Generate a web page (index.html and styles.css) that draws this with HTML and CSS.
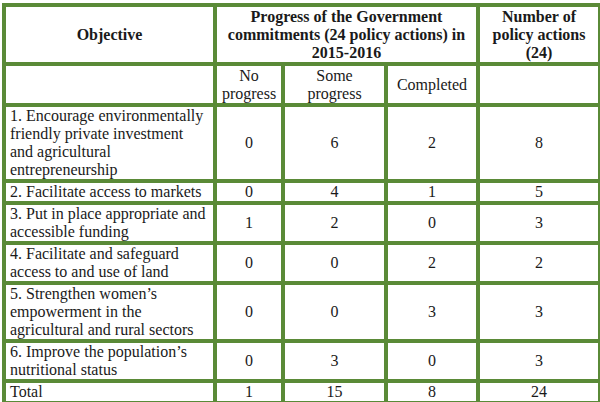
FILE: index.html
```html
<!DOCTYPE html>
<html>
<head>
<meta charset="utf-8">
<link rel="stylesheet" href="styles.css">
</head>
<body>
<table class="tbl">
  <colgroup>
    <col class="c-obj">
    <col class="c-no">
    <col class="c-some">
    <col class="c-done">
    <col class="c-num">
  </colgroup>
  <tr class="hdr">
    <th>Objective</th>
    <th colspan="3">Progress of the Government commitments (24 policy actions) in 2015-2016</th>
    <th>Number of policy actions (24)</th>
  </tr>
  <tr class="sub">
    <td></td>
    <td class="num">No progress</td>
    <td class="num">Some progress</td>
    <td class="num">Completed</td>
    <td></td>
  </tr>
  <tr>
    <td class="obj">1. Encourage environmentally friendly private investment and agricultural entrepreneurship</td>
    <td class="num">0</td><td class="num">6</td><td class="num">2</td><td class="num">8</td>
  </tr>
  <tr>
    <td class="obj">2. Facilitate access to markets</td>
    <td class="num">0</td><td class="num">4</td><td class="num">1</td><td class="num">5</td>
  </tr>
  <tr>
    <td class="obj">3. Put in place appropriate and accessible funding</td>
    <td class="num">1</td><td class="num">2</td><td class="num">0</td><td class="num">3</td>
  </tr>
  <tr>
    <td class="obj">4. Facilitate and safeguard access to and use of land</td>
    <td class="num">0</td><td class="num">0</td><td class="num">2</td><td class="num">2</td>
  </tr>
  <tr>
    <td class="obj">5. Strengthen women’s empowerment in the agricultural and rural sectors</td>
    <td class="num">0</td><td class="num">0</td><td class="num">3</td><td class="num">3</td>
  </tr>
  <tr>
    <td class="obj">6. Improve the population’s nutritional status</td>
    <td class="num">0</td><td class="num">3</td><td class="num">0</td><td class="num">3</td>
  </tr>
  <tr>
    <td class="obj">Total</td>
    <td class="num">1</td><td class="num">15</td><td class="num">8</td><td class="num">24</td>
  </tr>
</table>
</body>
</html>
```
FILE: styles.css
```css
html, body {
  margin: 0;
  padding: 0;
  background: #ffffff;
}
body {
  padding: 3px 2px 0 2px;
  font-family: "Liberation Serif", "Times New Roman", serif;
  color: #1a1a1a;
}
.tbl {
  border-collapse: collapse;
  table-layout: fixed;
  width: 596px;
  font-family: "Liberation Serif", "Times New Roman", serif;
  font-size: 16px;
  line-height: 18px;
}
.c-obj { width: 211px; }
.c-no { width: 68px; }
.c-some { width: 103px; }
.c-done { width: 92px; }
.c-num { width: 122px; }
.tbl th, .tbl td {
  border: 4px solid #5a8a37;
  padding: 0 4px;
  vertical-align: middle;
}
.tbl th {
  font-weight: bold;
  font-size: 16px;
  text-align: center;
  height: 55px;
  padding: 0 4px;
}
.sub td { height: 37px; }
.num { text-align: center; }
.obj { text-align: left; }
```
